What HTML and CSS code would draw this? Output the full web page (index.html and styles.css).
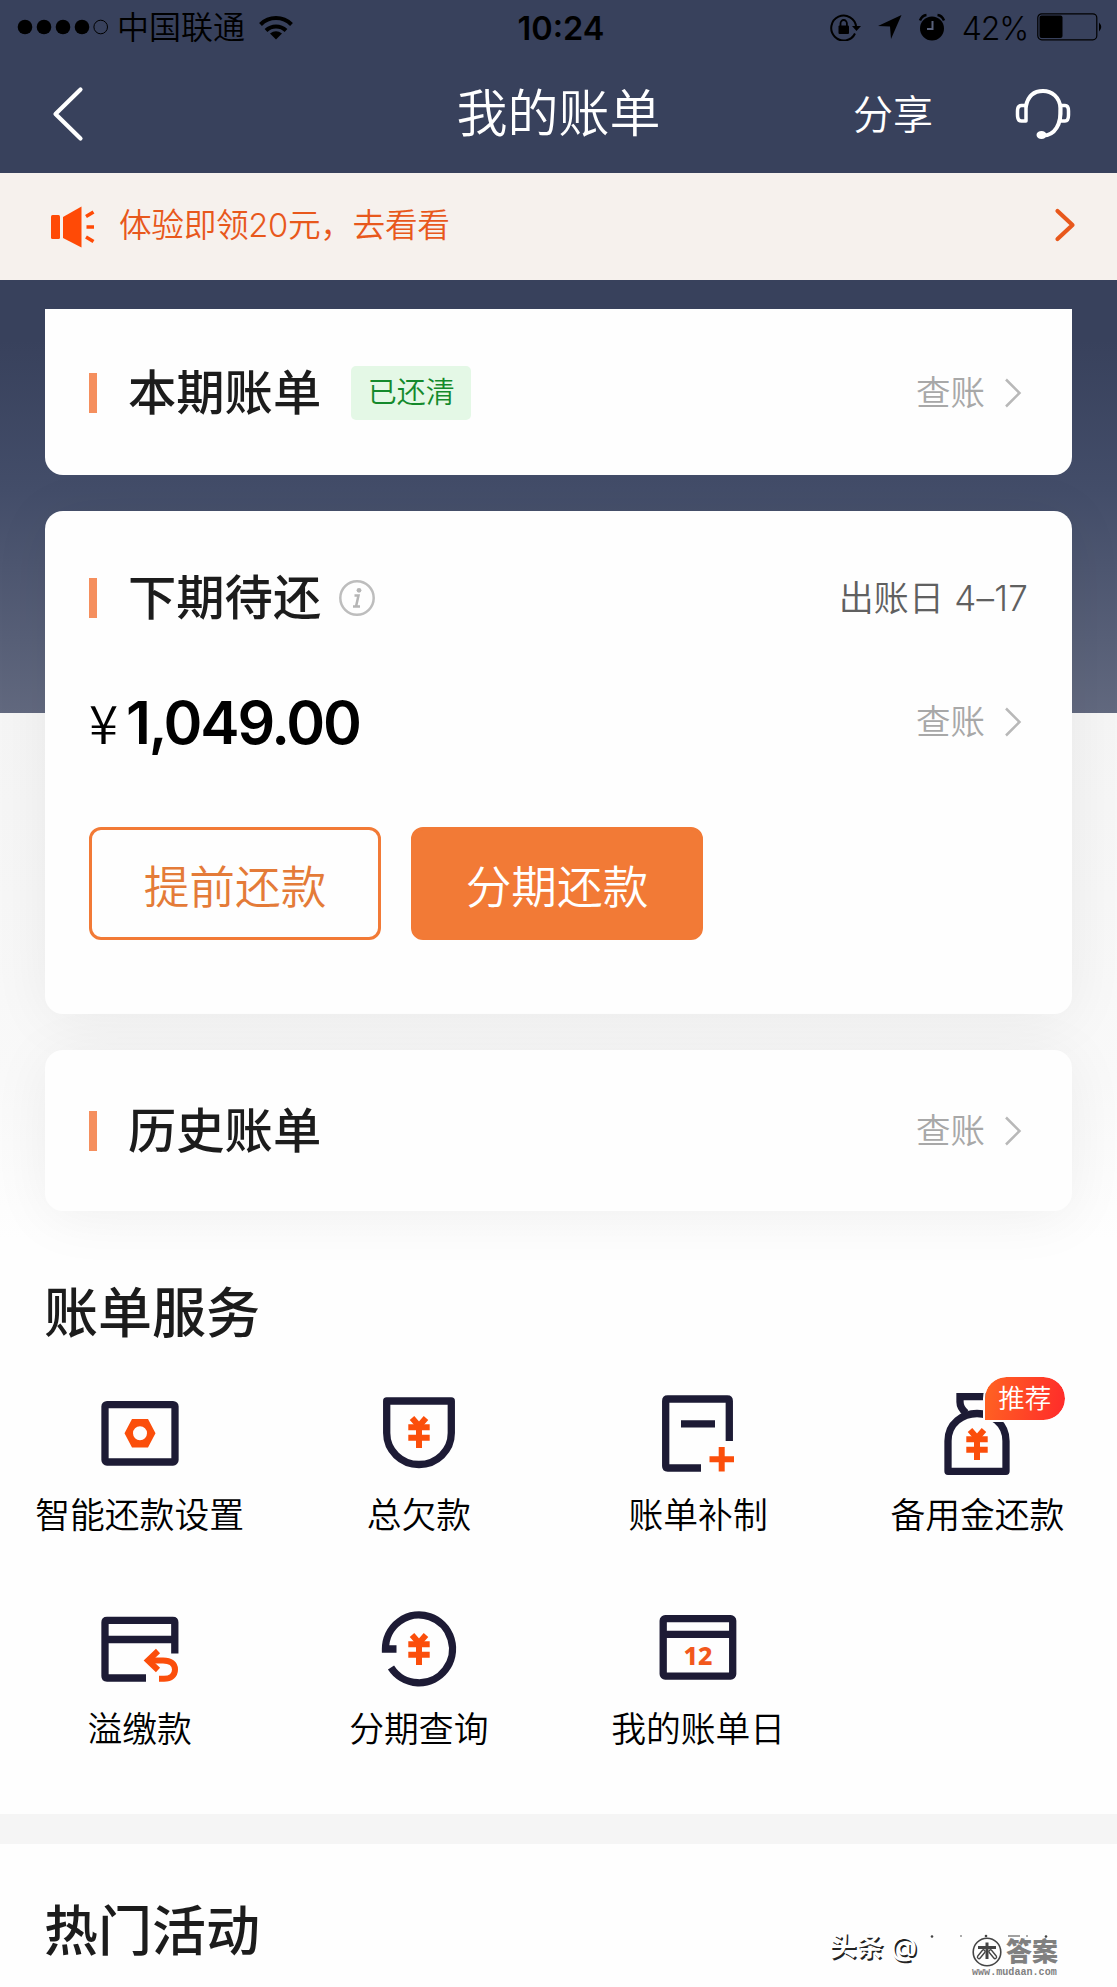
FILE: index.html
```html
<!DOCTYPE html>
<html lang="zh-CN">
<head>
<meta charset="utf-8">
<title>我的账单</title>
<link rel="stylesheet" href="styles.css">
</head>
<body>
<header class="header">
  <div class="status">
    <div class="status-left">
      <svg width="94" height="16" viewBox="0 0 94 16"><circle cx="8" cy="8" r="7.3"/><circle cx="27" cy="8" r="7.3"/><circle cx="46" cy="8" r="7.3"/><circle cx="65" cy="8" r="7.3"/><circle cx="83.700" cy="8" r="6.800" fill="none" stroke="#000" stroke-width="1"/></svg>
      <span class="carrier">中国联通</span>
      <svg class="wifi" width="34" height="25" viewBox="0 0 34 25" fill="none" stroke="#000" stroke-width="4"><path d="M1.500 9.500A22 22 0 0 1 32.500 9.500"/><path d="M7 15.500A14.500 14.500 0 0 1 27 15.500"/><path d="M17 24.500L11 18.500Q17 14 23 18.500Z" fill="#000" stroke="none"/></svg>
    </div>
    <time class="clock">10:24</time>
    <div class="status-right">
      <svg width="32" height="28" viewBox="0 0 32 28" fill="none" stroke="#000" stroke-width="2"><path d="M25 20.500A12.500 12.500 0 1 1 26.200 14"/><path d="M22 13h9l-4.500 5z" fill="#000" stroke="none"/><rect x="8.500" y="12.500" width="10.500" height="8.500" rx="1" fill="#000" stroke="none"/><path d="M10.500 13v-2.500a3.200 3.500 0 0 1 6.400 0V13" stroke-width="1.800"/></svg>
      <svg class="locate" width="24" height="24" viewBox="0 0 24 24"><path d="M23.500 0L13 24L12 11.500L0 11Z"/></svg>
      <svg class="alarm" width="28" height="28" viewBox="0 0 28 28"><circle cx="14" cy="15.500" r="12"/><path d="M2 7.500Q4 2.500 8.500 2M26 7.500Q24 2.500 19.500 2" fill="none" stroke="#000" stroke-width="2.500"/><path d="M14.500 8V16H9" fill="none" stroke="#59617a" stroke-width="2"/></svg>
      <span class="percent">42%</span>
      <svg class="battery" width="68" height="28" viewBox="0 0 68 28"><rect x=".8" y=".8" width="59" height="26" rx="4" fill="none" stroke="#000" stroke-width="1.200"/><rect x="2.500" y="2.500" width="23" height="22.500" rx="2"/><path d="M62 9.500Q66.500 14 62 18.500Z"/></svg>
    </div>
  </div>
  <nav class="nav">
    <svg class="back" width="32" height="56" viewBox="0 0 32 56"><path d="M28.500 3.500L3.500 28L28.500 52.500" fill="none" stroke="#fff" stroke-width="4.200" stroke-linecap="round" stroke-linejoin="round"/></svg>
    <h1 class="nav-title">我的账单</h1>
    <div class="nav-actions">
      <span class="share">分享</span>
      <svg width="56" height="52" viewBox="0 0 56 52" fill="none" stroke="#fff" stroke-width="4" stroke-linejoin="round" stroke-linecap="round"><path d="M11 33H6.500Q2.500 33 2.500 27V23Q2.500 17.500 6.500 17.500H11Z" stroke-width="3.500"/><path d="M11 18C13 8 19 3 28 3S44.500 9 45.500 20C46.500 36 40 47.500 28 47.500"/><path d="M45.500 17.500H50Q53.500 17.500 53.500 23V27Q53.500 33 50 33H45Z" stroke-width="3.500"/><ellipse cx="26.500" cy="47" rx="4" ry="3" fill="#fff" stroke-width="2"/></svg>
    </div>
  </nav>
</header>

<a class="notice">
  <svg width="44" height="42" viewBox="0 0 44 42" fill="#ff4a06"><rect x="0" y="9" width="9" height="24" rx="1.500"/><path d="M12 11L30.500 .5V41.500L12 32Z"/><path d="M35 10.500L42.500 6M35.500 21H43M35 31L42.500 35.500" stroke="#ff4a06" stroke-width="3.600"/></svg>
  <span class="notice-text">体验即领20元，去看看</span>
  <svg class="notice-arrow" width="22" height="34" viewBox="0 0 22 34"><path d="M3.500 3L18.500 17L3.500 31" fill="none" stroke="#e8581c" stroke-width="4.200" stroke-linecap="round" stroke-linejoin="round"/></svg>
</a>

<main>
  <section class="bills">
    <article class="card card-current">
      <div class="row">
        <h2 class="card-title">本期账单</h2>
        <span class="tag">已还清</span>
        <a class="check">查账<svg width="18" height="30" viewBox="0 0 18 30"><path d="M2 1.500L15.500 15L2 28.500"/></svg></a>
      </div>
    </article>
    <article class="card card-next">
      <div class="row">
        <h2 class="card-title">下期待还</h2>
        <svg class="info" width="38" height="38" viewBox="0 0 38 38"><circle cx="19" cy="19" r="16.700" fill="none" stroke="#bdbdbd" stroke-width="2.500"/><circle cx="21" cy="11.300" r="2.400" fill="#b5b5b5"/><path d="M16.500 16.500H20.500L18 27.500H22M15 27.500H18" fill="none" stroke="#b5b5b5" stroke-width="2.500"/></svg>
        <span class="due">出账日 4–17</span>
      </div>
      <div class="row amount-row">
        <span class="amount"><span class="yen">¥</span>1,049.00</span>
        <a class="check">查账<svg width="18" height="30" viewBox="0 0 18 30"><path d="M2 1.500L15.500 15L2 28.500"/></svg></a>
      </div>
      <div class="buttons">
        <button class="btn btn-outline">提前还款</button>
        <button class="btn btn-fill">分期还款</button>
      </div>
    </article>
    <article class="card card-history">
      <div class="row">
        <h2 class="card-title">历史账单</h2>
        <a class="check">查账<svg width="18" height="30" viewBox="0 0 18 30"><path d="M2 1.500L15.500 15L2 28.500"/></svg></a>
      </div>
    </article>
  </section>

  <section class="services">
    <h2 class="section-title">账单服务</h2>
    <div class="grid">
      <a class="item">
        <svg class="icon" viewBox="0 0 96 96"><rect x="13" y="17.600" width="70" height="57.400" rx="2"/><path class="solid" fill-rule="evenodd" d="M40 32H56L63.500 46.300L56 60.500H40L32.500 46.300ZM48 39.300A7 7 0 1 0 48 53.300A7 7 0 1 0 48 39.300Z"/></svg>
        <span>智能还款设置</span>
      </a>
      <a class="item">
        <svg class="icon" viewBox="0 0 96 96"><path stroke-linejoin="round" d="M15.700 14H80.300V46A32.300 31.500 0 0 1 15.700 46Z"/><g class="accent"><path d="M41 31L48 39L55 31"/><path d="M37.300 40.300H58.700M37.300 50.800H58.700M48 38V61"/></g></svg>
        <span>总欠款</span>
      </a>
      <a class="item">
        <svg class="icon" viewBox="0 0 96 96"><path d="M79.300 54V14Q79.300 12 77.300 12H17.700Q15.700 12 15.700 14V79Q15.700 81 17.700 81H51M31 36.800H65"/><path class="accent" d="M59.500 72.300H84M71.700 60V84.500"/></svg>
        <span>账单补制</span>
      </a>
      <a class="item">
        <svg class="icon" viewBox="0 0 96 96"><path stroke-linejoin="round" d="M19 84.300V54C19 36 34 26.500 48 26.500S77 36 77 54V84.300Z"/><path d="M64 9.700H31V15Q31 21 37 26"/><g class="accent" transform="translate(0 12)"><path d="M41 31L48 39L55 31"/><path d="M37.300 40.300H58.700M37.300 50.800H58.700M48 38V61"/></g></svg>
        <span>备用金还款</span>
        <em class="badge">推荐</em>
      </a>
      <a class="item">
        <svg class="icon" viewBox="0 0 96 96"><path d="M82.800 52.500V21.300Q82.800 19.300 80.800 19.300H15Q13 19.300 13 21.300V75Q13 77 15 77H54M13 38.500H82.800"/><g class="accent"><path d="M66 50L56 59.500L66 69"/><path d="M56 59.500H71C79 59.500 83 63 83 68.500S79 77.800 72 77.800H67"/></g></svg>
        <span>溢缴款</span>
      </a>
      <a class="item">
        <svg class="icon" viewBox="0 0 96 96"><path d="M25.500 48H14.500A33.500 33.900 0 1 1 20 66.500"/><g class="accent" transform="translate(0 3)"><path d="M41 31L48 39L55 31"/><path d="M37.300 40.300H58.700M37.300 50.800H58.700M48 38V61"/></g></svg>
        <span>分期查询</span>
      </a>
      <a class="item">
        <svg class="icon" viewBox="0 0 96 96"><rect x="13.200" y="17.700" width="69.500" height="57.400" rx="2"/><path d="M13 33.300H83"/><text class="day" x="48" y="63.500" text-anchor="middle">12</text></svg>
        <span>我的账单日</span>
      </a>
    </div>
  </section>

  <section class="activities">
    <h2 class="section-title">热门活动</h2>
    <div class="marks">
      <span class="mark-author">头条<i>@</i></span>
      <svg class="specks" width="130" height="6" viewBox="0 0 130 6" fill="#444"><circle cx="8" cy="3.500" r="1.300"/><circle cx="37" cy="3" r=".8"/><circle cx="62" cy="3" r="1.300"/><path d="M84 2.500h12v1h-12z"/><circle cx="103" cy="3" r=".8"/><circle cx="122" cy="3.500" r="1.300"/></svg>
      <div class="mark-site">
        <div class="mark-logo">
          <svg width="30" height="30" viewBox="0 0 30 30" fill="none" stroke="#444"><circle cx="15" cy="15" r="13.800" stroke-width="1.600"/><path d="M6 10.500H24M15 5.500V22" stroke-width="3"/><path d="M11.500 14.500L7 20M18.500 14.500L23 20" stroke-width="4.500" stroke-linecap="round"/><path d="M11.500 14.500L7 20M18.500 14.500L23 20" stroke="#fff" stroke-width="1.800" stroke-linecap="round"/></svg>
          <b>答案</b>
        </div>
        <div class="mark-url">www.mudaan.com</div>
      </div>
    </div>
  </section>
</main>
</body>
</html>
```
FILE: styles.css
```css
* { box-sizing: border-box; }
body {
  margin: 0;
  width: 1117px;
  height: 1987px;
  overflow: hidden;
  background: #fefefe;
  color: #000;
  font-family: Inter, "Noto Sans CJK SC", sans-serif;
  font-weight: 350;
}
h1, h2 { margin: 0; }
svg { display: block; flex: none; }

.header { height: 173px; background: #38415c; }
.status {
  display: grid;
  grid-template-columns: 1fr auto 1fr;
  align-items: center;
  height: 54px;
  padding: 0 12px 0 17px;
}
.status-left, .status-right { display: flex; align-items: center; }
.status-right { justify-content: flex-end; }
.carrier { margin-left: 6px; padding-top: 2px; font-size: 32px; line-height: 40px; }
.wifi { margin-left: 14px; }
.clock { padding-top: 3px; font-size: 32.500px; font-weight: 600; line-height: 40px; }
.locate { margin-left: 16px; }
.alarm { margin-left: 16px; }
.percent { margin: 3px 0 0 16px; font-size: 32px; line-height: 40px; letter-spacing: -1.200px; }
.battery { margin-left: 9px; }

.nav {
  display: grid;
  grid-template-columns: 1fr auto 1fr;
  align-items: center;
  height: 119px;
  padding: 0 46px 0 46px;
  color: #fff;
}
.back { margin-left: 6px; }
.nav-title { font-size: 51px; font-weight: 350; line-height: 60px; }
.nav-actions { display: flex; justify-content: flex-end; align-items: center; gap: 82px; }
.share { padding-top: 2px; font-size: 40px; line-height: 50px; }

.notice {
  display: flex;
  align-items: center;
  height: 107px;
  padding: 0 41px 0 51px;
  background: #f6f1ed;
  color: #e8581c;
}
.notice-text { margin: 0 auto 4px 24px; font-size: 32.700px; line-height: 40px; letter-spacing: -.35px; }
.notice-arrow { margin-bottom: 4px; }

.bills {
  display: flex;
  flex-direction: column;
  gap: 36px;
  height: 970px;
  padding: 29px 45px 0;
  background:
    linear-gradient(#38415c 0, #38415c 60px, #434d69 210px, #62697f 433px) 0 0 / 100% 433px no-repeat,
    linear-gradient(#f5f5f5 433px, #f9f9f9 800px, #fefefe 960px);
}
.card { border-radius: 18px; background: #fefefe; padding: 0 44px; }
.card-current { height: 166px; border-radius: 0 0 18px 18px; padding-top: 54px; }
.card-next { height: 503px; padding-top: 57px; box-shadow: 0 6px 60px rgba(0, 0, 0, .06); }
.card-history { height: 161px; padding-top: 51px; box-shadow: 0 6px 60px rgba(0, 0, 0, .06); }
.row { display: flex; align-items: center; height: 60px; }
.card-title {
  display: flex;
  align-items: center;
  gap: 31px;
  font-size: 48.300px;
  font-weight: 500;
  line-height: 60px;
  color: #1c1c1c;
}
.card-title::before { content: ""; width: 8px; height: 40px; background: #f58f5e; }
.tag {
  margin-left: 30px;
  width: 120px;
  border-radius: 5px;
  background: #e4f8e6;
  color: #148a2c;
  font-size: 29px;
  line-height: 54px;
  text-align: center;
}
.info { margin-left: 17px; }
.check {
  display: flex;
  align-items: center;
  gap: 19px;
  margin: 0 6px 0 auto;
  color: #a8a8a8;
  font-size: 34.500px;
  line-height: 50px;
}
.check path { fill: none; stroke: #b8b8b8; stroke-width: 2.500; }
.due { margin-left: auto; color: #606060; font-size: 35px; line-height: 50px; letter-spacing: .2px; }
.amount-row { margin-top: 63px; height: 62px; }
.amount { font-size: 59px; font-weight: 600; line-height: 62px; letter-spacing: -2.200px; }
.yen { margin-right: 10px; font-family: "Noto Sans CJK SC", sans-serif; font-size: 53px; font-weight: 350; }
.buttons { display: flex; gap: 30px; margin-top: 74px; }
.btn {
  width: 292px;
  height: 113px;
  padding: 0;
  border: 3px solid #f27a36;
  border-radius: 12px;
  font: inherit;
  font-size: 45.700px;
}
.btn-outline { background: #fefefe; color: #e47b38; }
.btn-fill { background: #f27a36; color: #fff; }

.services { height: 564px; padding-top: 34px; }
.section-title { padding-left: 44px; font-size: 54px; font-weight: 500; line-height: 60px; color: #1c1c1c; }
.grid { display: grid; grid-template-columns: repeat(4, 1fr); row-gap: 61px; margin-top: 43px; }
.item {
  position: relative;
  display: flex;
  flex-direction: column;
  align-items: center;
  gap: 7px;
  font-size: 34.800px;
  line-height: 50px;
}
.icon { width: 96px; height: 96px; fill: none; stroke: #1d1b35; stroke-width: 7.300; }
.accent { stroke: #fb4e0b; stroke-width: 6; }
.solid { fill: #fb4e0b; stroke: none; }
.day { fill: #f2581c; stroke: none; font-family: "Noto Sans", sans-serif; font-size: 25px; font-weight: 800; }
.badge {
  position: absolute;
  left: 145px;
  top: -12px;
  width: 84px;
  height: 47px;
  border: 2px solid #fefefe;
  border-radius: 24px 24px 24px 0;
  background: linear-gradient(100deg, #ff6422, #ff2a2a) padding-box;
  color: #fff;
  font-size: 26.500px;
  font-style: normal;
  line-height: 43px;
  text-align: center;
}

.activities {
  display: flex;
  justify-content: space-between;
  height: 173px;
  padding-top: 58px;
  border-top: 30px solid #f5f5f5;
}
.marks { display: flex; margin: 30px 59px 0 0; align-items: flex-start; }
.mark-author {
  margin-top: -2px;
  color: #fff;
  font-size: 27px;
  font-weight: 700;
  line-height: 34px;
  text-shadow: 1.500px 1.500px 0 #222;
}
.mark-author i { margin-left: 7px; font-style: normal; font-weight: 500; }
.specks { margin: 1px -82px 0 7px; }
.mark-site { margin-top: 4px; color: #808080; }
.mark-logo { display: flex; align-items: center; gap: 4px; height: 31px; }
.mark-logo b { font-size: 26px; font-weight: 900; line-height: 33px; }
.mark-url { font: bold 10.100px/11px "Liberation Mono", monospace; }
```
